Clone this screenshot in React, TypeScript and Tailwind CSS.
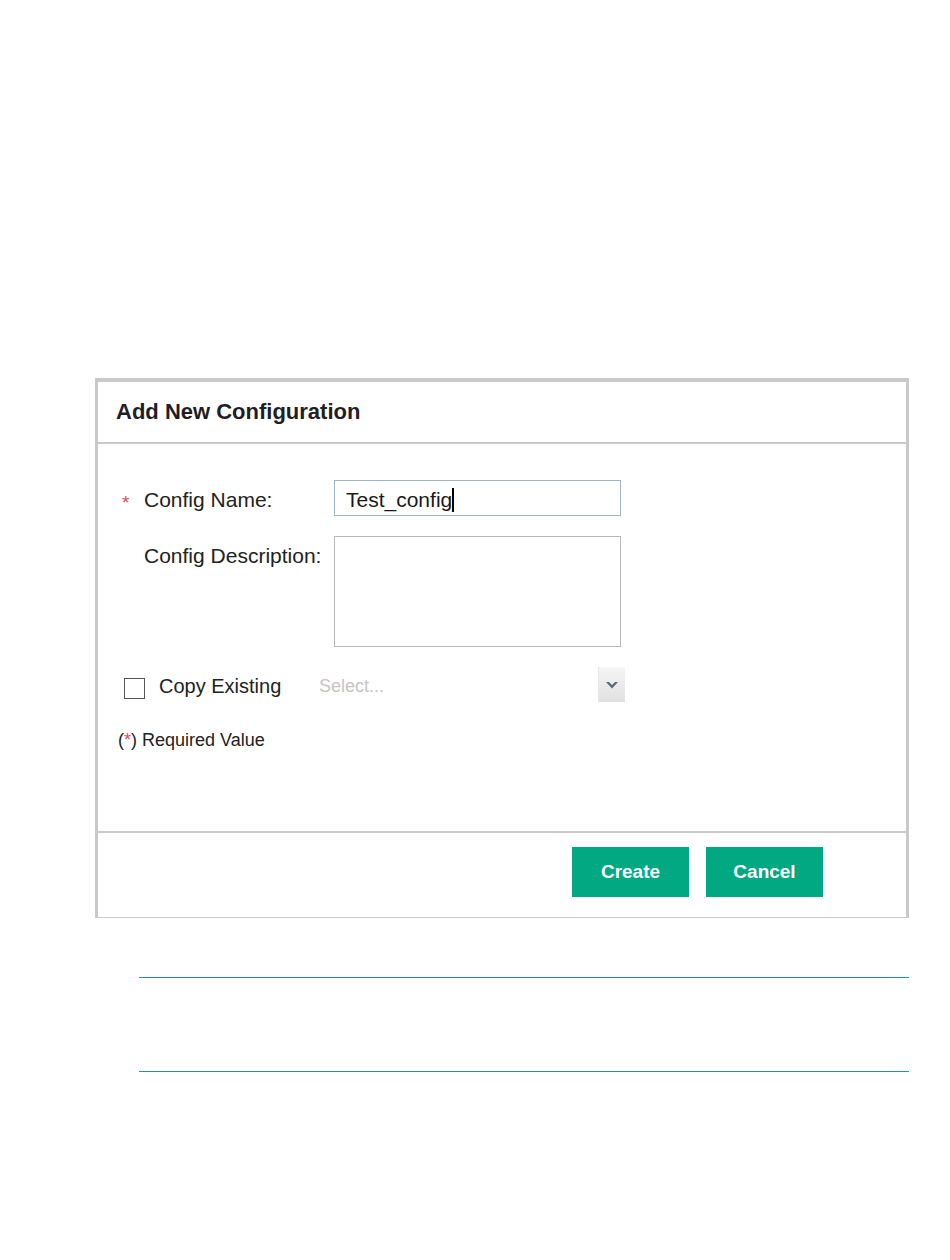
import React from "react";

export default function App() {
  const font = { fontFamily: '"Liberation Sans", Arial, sans-serif' };
  return (
    <div className="w-[950px] min-h-[1260px] bg-white pt-[378px]" style={font}>
      {/* Dialog */}
      <div className="ml-[95px] w-[814px] border-t-4 border-l-[3px] border-r-[3px] border-b border-[#c9c9c9] bg-white">
        {/* Header */}
        <div className="h-[62px] flex items-center pl-[18px] border-b-2 border-[#c9c9c9]">
          <h1 className="text-[22px] leading-[28px] font-bold text-[#1e1e24]">Add New Configuration</h1>
        </div>

        {/* Body */}
        <div className="h-[387px] pt-[36px]">
          {/* Config Name */}
          <div className="flex items-start">
            <div className="w-[236px] flex items-start pl-[24px]">
              <span className="w-[22px] pt-[12px] text-[19px] leading-[22px] text-[#e2456a]">*</span>
              <span className="pt-[8px] text-[21px] leading-[24px] text-[#222]">Config Name:</span>
            </div>
            <div className="w-[287px] h-[36px] border-[1.5px] border-[#9db3c6] pl-[11px] pt-[6.5px] text-[21px] leading-[24px] text-[#1a1a1a] whitespace-nowrap">
              Test_config
              <span className="inline-block w-[2px] h-[24px] bg-black align-top"></span>
            </div>
          </div>

          {/* Config Description */}
          <div className="flex items-start mt-[20px]">
            <div className="w-[236px] pl-[46px] pt-[8px] text-[21px] leading-[24px] text-[#222]">Config Description:</div>
            <div className="w-[287px] h-[111px] border-[1.5px] border-[#b8b8b8]"></div>
          </div>

          {/* Copy Existing */}
          <div className="flex items-start mt-[20px] h-[35px]">
            <div className="w-[212px] flex items-start pl-[26px]">
              <div className="mt-[11px] w-[21px] h-[21px] border-[1.5px] border-[#555]"></div>
              <span className="ml-[14px] mt-[7px] text-[20px] leading-[24px] text-[#222]">Copy Existing</span>
            </div>
            <div className="w-[315px] h-[35px] flex items-center justify-between pl-[9px]">
              <span className="pt-[2px] text-[18px] leading-[22px] text-[#c4c4c4]">Select...</span>
              <div className="w-[27px] h-[35px] bg-gradient-to-b from-[#f6f6f6] to-[#e0e0e0] border-l border-[#e6e6e6] flex items-center justify-center">
                <svg width="12" height="8" viewBox="0 0 12 8">
                  <path d="M0 1 L3 1 L6 4 L9 1 L12 1 L6 7.5 Z" fill="#5f6579" />
                </svg>
              </div>
            </div>
          </div>

          {/* Required Value */}
          <div className="mt-[27px] pl-[20px] text-[18px] leading-[22px] text-[#222]">
            (<span className="text-[#e2456a]">*</span>) Required Value
          </div>
        </div>

        {/* Footer */}
        <div className="h-[86px] border-t-2 border-[#c9c9c9] flex justify-end items-start pt-[14px] pr-[83px] gap-[17px]">
          <button className="w-[117px] h-[50px] bg-[#01a982] text-white text-[19px] font-bold flex items-center justify-center">
            Create
          </button>
          <button className="w-[117px] h-[50px] bg-[#01a982] text-white text-[19px] font-bold flex items-center justify-center">
            Cancel
          </button>
        </div>
      </div>

      {/* Note rule lines */}
      <div className="ml-[139px] mt-[59px] w-[770px] flex flex-col">
        <div className="h-px bg-[#1f94a9]"></div>
        <div className="h-[93px]"></div>
        <div className="h-px bg-[#1f94a9]"></div>
      </div>
    </div>
  );
}
